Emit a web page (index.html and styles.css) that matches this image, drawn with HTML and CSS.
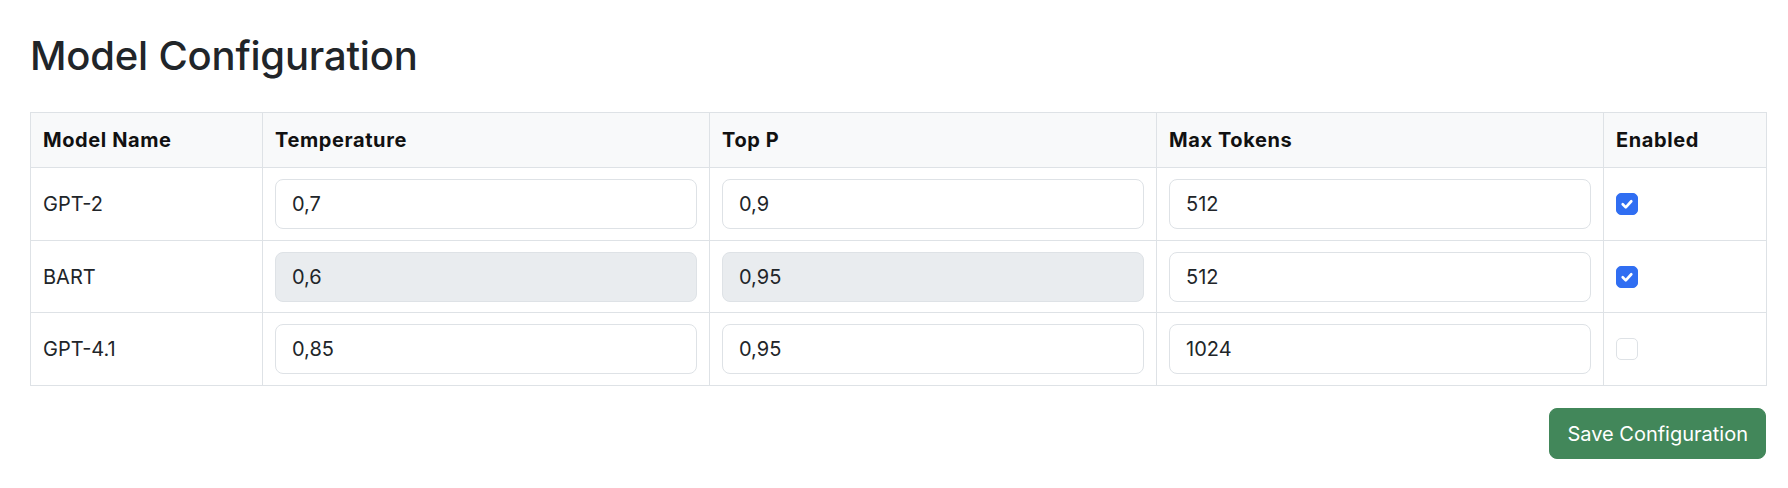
FILE: index.html
```html
<!DOCTYPE html>
<html lang="en">
<head>
<meta charset="utf-8">
<title>Model Configuration</title>
<link rel="stylesheet" href="styles.css">
</head>
<body>
<main class="page">
  <h1 class="title">Model Configuration</h1>
  <table class="config-table">
    <colgroup>
      <col class="c-name">
      <col class="c-param">
      <col class="c-param">
      <col class="c-param">
      <col class="c-enabled">
    </colgroup>
    <thead>
      <tr>
        <th>Model Name</th>
        <th>Temperature</th>
        <th>Top P</th>
        <th>Max Tokens</th>
        <th>Enabled</th>
      </tr>
    </thead>
    <tbody>
      <tr>
        <td>GPT-2</td>
        <td><input class="field" type="text" value="0,7"></td>
        <td><input class="field" type="text" value="0,9"></td>
        <td><input class="field" type="text" value="512"></td>
        <td><span class="check on"><svg viewBox="0 0 21 21" width="21" height="21"><path d="M6 10.8 L9.2 14 L15 7.6" fill="none" stroke="#fff" stroke-width="2.8" stroke-linecap="round" stroke-linejoin="round"/></svg></span></td>
      </tr>
      <tr>
        <td>BART</td>
        <td><input class="field" type="text" value="0,6" disabled></td>
        <td><input class="field" type="text" value="0,95" disabled></td>
        <td><input class="field" type="text" value="512"></td>
        <td><span class="check on"><svg viewBox="0 0 21 21" width="21" height="21"><path d="M6 10.8 L9.2 14 L15 7.6" fill="none" stroke="#fff" stroke-width="2.8" stroke-linecap="round" stroke-linejoin="round"/></svg></span></td>
      </tr>
      <tr>
        <td>GPT-4.1</td>
        <td><input class="field" type="text" value="0,85"></td>
        <td><input class="field" type="text" value="0,95"></td>
        <td><input class="field" type="text" value="1024"></td>
        <td><span class="check"></span></td>
      </tr>
    </tbody>
  </table>
  <div class="actions">
    <button class="save-btn" type="button">Save Configuration</button>
  </div>
</main>
</body>
</html>
```
FILE: styles.css
```css
html, body {
  margin: 0;
  padding: 0;
  background: #ffffff;
}

body {
  font-family: Inter, "Noto Sans", "Liberation Sans", sans-serif;
  font-size: 20px;
  line-height: 30px;
  color: #212529;
}

.page {
  padding: 32px 22px 0 30px;
}

.title {
  margin: 0 0 32px 0;
  font-size: 40px;
  line-height: 48px;
  font-weight: 500;
  letter-spacing: -0.2px;
  color: #212529;
}

.config-table {
  width: 1736px;
  border-collapse: collapse;
  table-layout: fixed;
}

.c-name { width: 232px; }
.c-param { width: 447px; }
.c-enabled { width: 163px; }

.config-table th,
.config-table td {
  border: 1px solid #dee2e6;
  text-align: left;
  vertical-align: middle;
}

.config-table th {
  background: #f8f9fa;
  font-weight: 700;
  letter-spacing: 0.6px;
  color: #111111;
  padding: 12px 12px;
  height: 30px;
}

.config-table td {
  padding: 11px 12px;
  height: 50px;
  color: #212529;
}

.config-table tbody tr:nth-child(2) td {
  padding-bottom: 10px;
}

.field {
  display: block;
  box-sizing: border-box;
  width: 100%;
  height: 50px;
  margin: 0;
  padding: 9px 16px;
  border: 1px solid #dee2e6;
  border-radius: 8px;
  background: #ffffff;
  font-family: inherit;
  font-size: 20px;
  line-height: 30px;
  color: #212529;
  outline: none;
}

.field:disabled {
  background: #e9ecef;
  color: #212529;
  -webkit-text-fill-color: #212529;
  opacity: 1;
}

.check {
  display: block;
  box-sizing: border-box;
  width: 22px;
  height: 22px;
  border: 1px solid #dee2e6;
  border-radius: 5px;
  background: #ffffff;
}

.check svg {
  display: block;
  width: 20px;
  height: 20px;
}

.check.on {
  background: #306ef2;
  border-color: #306ef2;
}

.actions {
  display: flex;
  justify-content: flex-end;
  margin-top: 22px;
}

.save-btn {
  box-sizing: border-box;
  height: 51px;
  padding: 0 17px;
  border: 1px solid #42875a;
  border-radius: 8px;
  background: #42875a;
  color: #ffffff;
  font-family: inherit;
  font-size: 20px;
  line-height: 30px;
  cursor: pointer;
}
```
